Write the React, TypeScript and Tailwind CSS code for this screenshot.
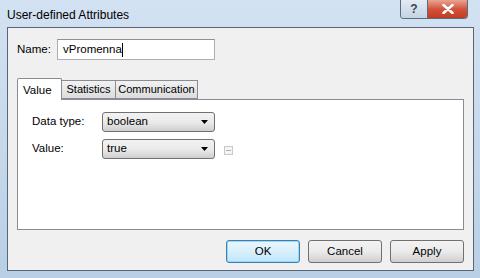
import React from "react";

const font = { fontFamily: '"Liberation Sans", Arial, sans-serif' };

function Select({ value }: { value: string }) {
  return (
    <div className="flex items-center w-[113px] h-[20px] rounded-[3px] border border-[#707070] bg-gradient-to-b from-[#f2f2f2] via-[#ebebeb] to-[#cfcfcf] pl-[4px] pr-[6px]">
      <span className="flex-1 text-[11.5px] text-black leading-none">{value}</span>
      <svg width="7" height="4" viewBox="0 0 7 4">
        <path d="M0 0 H7 L3.5 4 Z" fill="#000" />
      </svg>
    </div>
  );
}

function Btn({ label, primary }: { label: string; primary?: boolean }) {
  return (
    <div
      className={
        "flex items-center justify-center w-[74px] h-[23px] rounded-[3px] text-[11.5px] text-black " +
        (primary
          ? "border border-[#3c7fb1] bg-gradient-to-b from-[#eaf6fd] via-[#d9f0fc] to-[#bee6fd] shadow-[inset_0_0_0_1px_#9fd6f6]"
          : "border border-[#707070] bg-gradient-to-b from-[#f2f2f2] via-[#ebebeb] to-[#cfcfcf]")
      }
    >
      {label}
    </div>
  );
}

export default function App() {
  return (
    <div
      className="w-[480px] h-[278px] bg-gradient-to-b from-[#d3e2f2] to-[#b9cfe6] flex flex-col overflow-hidden"
      style={font}
    >
      {/* title bar */}
      <div className="h-[27px] flex items-start shrink-0">
        <span className="pl-[7px] pt-[6px] text-[12px] text-black">User-defined Attributes</span>
        <div className="flex-1" />
        <div className="flex mr-[12px] rounded-b-[4px] overflow-hidden border border-t-0 border-[#5d6a7d]">
          <div className="w-[27px] h-[18px] flex items-center justify-center bg-gradient-to-b from-[#e3ebf4] to-[#c4d3e3] border-r border-[#5d6a7d] text-[12px] font-bold text-[#3b4656]">
            ?
          </div>
          <div className="w-[39px] h-[18px] flex items-center justify-center bg-gradient-to-b from-[#e8a493] via-[#d0533a] to-[#c23b22] text-white">
            <svg width="12" height="10" viewBox="0 0 12 10">
              <path d="M1.5 1 L10.5 9 M10.5 1 L1.5 9" stroke="#fff" strokeWidth="2.6" strokeLinecap="round" />
            </svg>
          </div>
        </div>
      </div>

      {/* client */}
      <div className="flex-1 pl-[7px] pr-[6px] pb-[7px] flex">
        <div className="flex-1 border border-[#5a6577] bg-[#f0f0f0] flex flex-col pl-[9px] pr-[9px] pt-[11px] pb-[7px] text-[11.5px]">
          <div className="flex items-center h-[21px]">
            <span className="w-[40px] text-black">Name:</span>
            <div className="w-[158px] h-[21px] border border-[#abadb3] border-t-[#8e9199] bg-white flex items-center pl-[5px] text-black">
              vPromenna<span className="w-px h-[14px] bg-black" />
            </div>
          </div>

          {/* tabs */}
          <div className="mt-[17px] flex items-end h-[22px]">
            <div className="relative z-10 -mb-px h-[22px] w-[45px] border border-b-0 border-[#898c95] bg-white flex items-start pl-[5px] pt-[3px] text-black rounded-t-[2px]">
              Value
            </div>
            <div className="h-[19px] w-[54px] border border-l-0 border-[#898c95] bg-gradient-to-b from-[#f2f2f2] to-[#dcdcdc] flex items-center justify-center text-[11px] text-black">
              Statistics
            </div>
            <div className="h-[19px] w-[82px] border border-l-0 border-[#898c95] bg-gradient-to-b from-[#f2f2f2] to-[#dcdcdc] flex items-center justify-center text-[11px] text-black">
              Communication
            </div>
          </div>
          <div className="h-[131px] border border-[#898c95] bg-white flex flex-col pl-[14px] pt-[12px] gap-[7px]">
            <div className="flex items-center">
              <span className="w-[70px] text-black">Data type:</span>
              <Select value="boolean" />
            </div>
            <div className="flex items-center">
              <span className="w-[70px] text-black">Value:</span>
              <Select value="true" />
              <div className="ml-[9px] mt-[2px] w-[9px] h-[9px] border border-[#c8c8c8] bg-[#f4f4f4] flex items-center justify-center">
                <div className="w-[5px] h-px bg-[#b0b0b0]" />
              </div>
            </div>
          </div>

          {/* buttons */}
          <div className="flex-1" />
          <div className="flex justify-end gap-[8px]">
            <Btn label="OK" primary />
            <Btn label="Cancel" />
            <Btn label="Apply" />
          </div>
        </div>
      </div>
    </div>
  );
}
